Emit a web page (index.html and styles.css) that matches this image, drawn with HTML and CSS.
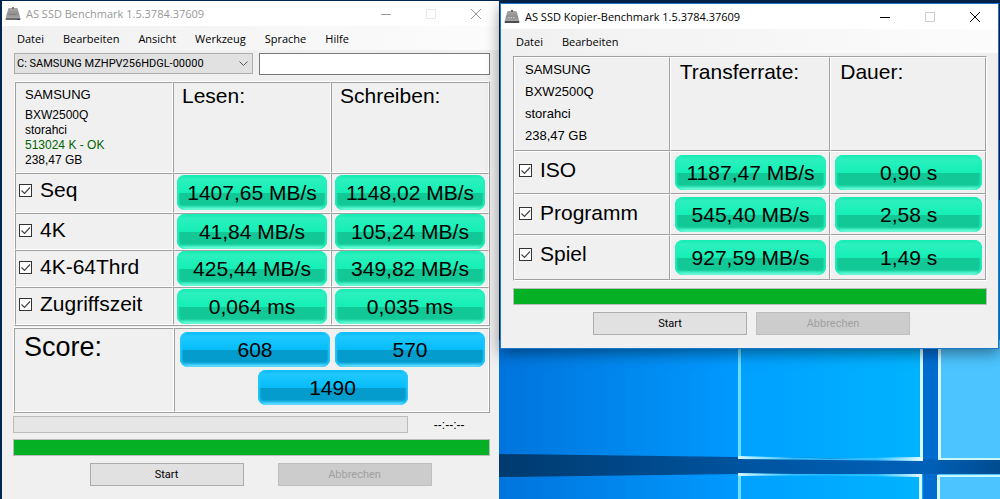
FILE: index.html
```
<!DOCTYPE html>
<html lang="de">
<head>
    <meta charset="UTF-8">
    <meta name="viewport" content="width=device-width, initial-scale=1.0">
    <title>AS SSD Benchmark</title>
    <link rel="stylesheet" href="styles.css">
</head>
<body>
    <svg class="wallpaper" viewBox="0 0 1000 499" preserveAspectRatio="none" aria-hidden="true">
        <defs>
            <linearGradient id="pane1"><stop offset="0" stop-color="#0074dc"/><stop offset="1" stop-color="#009aff"/></linearGradient>
            <linearGradient id="pane2"><stop offset="0" stop-color="#00a0ff"/><stop offset="1" stop-color="#00b4ff"/></linearGradient>
            <linearGradient id="bar"><stop offset="0" stop-color="#003a6e"/><stop offset="0.5" stop-color="#0054a0"/><stop offset="0.85" stop-color="#0060b8"/><stop offset="1" stop-color="#004c90"/></linearGradient>
            <linearGradient id="edge"><stop offset="0" stop-color="#d8fcff"/><stop offset="0.3" stop-color="#30c0ff"/><stop offset="0.75" stop-color="#30c0ff"/><stop offset="1" stop-color="#e8ffff"/></linearGradient>
            <linearGradient id="metal" x2="0" y2="1"><stop offset="0" stop-color="#a8a8a8"/><stop offset="0.5" stop-color="#8e8e8e"/><stop offset="1" stop-color="#b4b4b4"/></linearGradient>
        </defs>
        <rect width="1000" height="499" fill="#00264f"/>
        <rect x="996" y="200" width="4" height="150" fill="#0090e0"/>
        <rect x="499" y="340" width="240" height="159" fill="url(#pane1)"/>
        <rect x="738" y="340" width="185" height="159" fill="url(#pane2)"/>
        <rect x="923" y="340" width="15" height="159" fill="#006cd0"/>
        <rect x="938" y="340" width="62" height="159" fill="#4cc4ff"/>
        <path d="M499 454L738 457L1000 460V474L738 474L499 477Z" fill="url(#bar)"/>
        <path d="M738 340h3v118h-3zM738 474h3v25h-3z" fill="#6cdcff"/>
        <path d="M920 340h3v121h-3zM919 474h3v25h-3zM938 340h3v120h-3zM937 475h3v24h-3z" fill="#d8fbff"/>
        <path d="M738 456L830 458.500L922 457V461L830 460L738 459Z" fill="url(#edge)"/>
        <path d="M738 473L830 474.500L922 474V477L830 475.500L738 476Z" fill="url(#edge)"/>
        <path d="M938 458h62v2h-62zM938 475h62v2h-62z" fill="#c8f8ff"/>
    </svg>

    <section class="window window-main">
        <header class="titlebar">
            <svg class="app-icon" viewBox="0 0 16 14"><path d="M3.500 1h9l2.700 9.500v2.500H.8v-2.500z" fill="url(#metal)"/><path d="M.8 11h14.400v2H.8z" fill="#6c6c6c"/><path d="M7 0h2v2H7z" fill="#777"/><path d="M4 7.500h1.500m1 0H8m1 0h1.500" stroke="#777"/><path d="M12 12h3v1h-3z" fill="#33a"/></svg>
            <h1>AS SSD Benchmark 1.5.3784.37609</h1>
            <div class="controls">
                <button aria-label="Minimieren"><svg viewBox="0 0 10 10"><path d="M0 5.500h10"/></svg></button>
                <button class="maximize" aria-label="Maximieren" disabled><svg viewBox="0 0 10 10"><path d="M.5.5h9v9h-9z"/></svg></button>
                <button aria-label="Schließen"><svg viewBox="0 0 10 10"><path d="M0 0l10 10M10 0L0 10"/></svg></button>
            </div>
        </header>
        <nav class="menubar">
            <button>Datei</button>
            <button>Bearbeiten</button>
            <button>Ansicht</button>
            <button>Werkzeug</button>
            <button>Sprache</button>
            <button>Hilfe</button>
        </nav>
        <main class="content">
            <div class="toolbar">
                <div class="drive">
                    <select aria-label="Laufwerk"><option>C: SAMSUNG MZHPV256HDGL-00000</option></select>
                    <svg viewBox="0 0 9 6"><path d="M.5.5l4 4 4-4"/></svg>
                </div>
                <input class="note" type="text" aria-label="Notiz">
            </div>
            <table class="results">
                <thead>
                    <tr>
                        <th class="device">
                            <p class="vendor">SAMSUNG</p>
                            <p>BXW2500Q</p>
                            <p>storahci</p>
                            <p class="ok">513024 K - OK</p>
                            <p>238,47 GB</p>
                        </th>
                        <th>Lesen:</th>
                        <th>Schreiben:</th>
                    </tr>
                </thead>
                <tbody>
                    <tr class="first">
                        <td><label><input type="checkbox" checked>Seq</label></td>
                        <td><div class="pill">1407,65 MB/s</div></td>
                        <td><div class="pill">1148,02 MB/s</div></td>
                    </tr>
                    <tr>
                        <td><label><input type="checkbox" checked>4K</label></td>
                        <td><div class="pill">41,84 MB/s</div></td>
                        <td><div class="pill">105,24 MB/s</div></td>
                    </tr>
                    <tr>
                        <td><label><input type="checkbox" checked>4K-64Thrd</label></td>
                        <td><div class="pill">425,44 MB/s</div></td>
                        <td><div class="pill">349,82 MB/s</div></td>
                    </tr>
                    <tr class="last">
                        <td><label><input type="checkbox" checked>Zugriffszeit</label></td>
                        <td><div class="pill">0,064 ms</div></td>
                        <td><div class="pill">0,035 ms</div></td>
                    </tr>
                </tbody>
            </table>
            <div class="score">
                <h2>Score:</h2>
                <div class="score-values">
                    <div class="pill blue">608</div>
                    <div class="pill blue">570</div>
                    <div class="pill blue total">1490</div>
                </div>
            </div>
            <div class="status">
                <progress value="0" max="100" aria-label="Teilfortschritt"></progress>
                <span>--:--:--</span>
            </div>
            <progress value="100" max="100" aria-label="Gesamtfortschritt"></progress>
            <div class="actions">
                <button>Start</button>
                <button disabled>Abbrechen</button>
            </div>
        </main>
    </section>

    <section class="window window-copy">
        <header class="titlebar">
            <svg class="app-icon" viewBox="0 0 16 14"><path d="M3.500 1h9l2.700 9.500v2.500H.8v-2.500z" fill="url(#metal)"/><path d="M.8 11h14.400v2H.8z" fill="#4c4c4c"/><path d="M7 0h2v2H7z" fill="#666"/><path d="M4 7.500h1.500m1 0H8m1 0h1.500" stroke="#ccc"/></svg>
            <h1>AS SSD Kopier-Benchmark 1.5.3784.37609</h1>
            <div class="controls">
                <button aria-label="Minimieren"><svg viewBox="0 0 10 10"><path d="M0 5.500h10"/></svg></button>
                <button class="maximize" aria-label="Maximieren" disabled><svg viewBox="0 0 10 10"><path d="M.5.5h9v9h-9z"/></svg></button>
                <button aria-label="Schließen"><svg viewBox="0 0 10 10"><path d="M0 0l10 10M10 0L0 10"/></svg></button>
            </div>
        </header>
        <nav class="menubar">
            <button>Datei</button>
            <button>Bearbeiten</button>
        </nav>
        <main class="content">
            <table class="results">
                <thead>
                    <tr>
                        <th class="device">
                            <p>SAMSUNG</p>
                            <p>BXW2500Q</p>
                            <p>storahci</p>
                            <p>238,47 GB</p>
                        </th>
                        <th class="rate">Transferrate:</th>
                        <th>Dauer:</th>
                    </tr>
                </thead>
                <tbody>
                    <tr>
                        <td><label><input type="checkbox" checked>ISO</label></td>
                        <td><div class="pill">1187,47 MB/s</div></td>
                        <td><div class="pill">0,90 s</div></td>
                    </tr>
                    <tr class="middle">
                        <td><label><input type="checkbox" checked>Programm</label></td>
                        <td><div class="pill">545,40 MB/s</div></td>
                        <td><div class="pill">2,58 s</div></td>
                    </tr>
                    <tr class="last">
                        <td><label><input type="checkbox" checked>Spiel</label></td>
                        <td><div class="pill">927,59 MB/s</div></td>
                        <td><div class="pill">1,49 s</div></td>
                    </tr>
                </tbody>
            </table>
            <progress value="100" max="100" aria-label="Fortschritt"></progress>
            <div class="actions">
                <button>Start</button>
                <button disabled>Abbrechen</button>
            </div>
        </main>
    </section>
</body>
</html>
```
FILE: styles.css
```
* {
    box-sizing: border-box;
}
body {
    margin: 0;
    min-height: 100vh;
    overflow: hidden;
    background: #00264f;
    color: #000;
    font-family: "Liberation Sans", Arial, sans-serif;
    font-size: 12px;
}
h1, h2, p {
    margin: 0;
    font-weight: normal;
}
button {
    padding: 0;
    font: inherit;
    color: inherit;
}
.wallpaper {
    position: absolute;
    top: 0;
    left: 0;
    width: 100%;
    height: 100%;
}

/* windows */
.window {
    position: absolute;
    background: #f0f0f0;
}
.window-main {
    top: 1px;
    left: 2px;
    right: calc(50% + 1px);
    min-height: 100vh;
}
.window-copy {
    top: 3px;
    left: 50%;
    right: 1px;
    border: 1px solid #1a78cc;
    box-shadow: 0 4px 14px rgba(0, 0, 0, 0.45);
}
.titlebar {
    display: flex;
    align-items: center;
    height: 25px;
    padding: 0 1px 0 3px;
    background: #fff;
    font-family: "Open Sans", "Noto Sans", sans-serif;
}
.titlebar h1 {
    flex: 1;
    padding-left: 5px;
    font-size: 11px;
    white-space: nowrap;
}
.app-icon {
    width: 16px;
    height: 14px;
}
.window-main .titlebar {
    color: #999;
}
.controls {
    display: flex;
}
.controls button {
    display: flex;
    align-items: center;
    justify-content: center;
    width: 45px;
    height: 25px;
    border: none;
    background: none;
}
.controls svg {
    width: 10px;
    height: 10px;
    fill: none;
    stroke: currentColor;
}
.controls .maximize {
    color: #ccc;
}
.window-main .maximize {
    color: #e6e6e6;
}
.menubar {
    display: flex;
    align-items: center;
    gap: 19px;
    height: 24px;
    padding-left: 15px;
    background: linear-gradient(90deg, #f0f0f0, #fcfcfc);
    font-family: "Open Sans", "Noto Sans", sans-serif;
    font-size: 11px;
}
.menubar button {
    border: none;
    background: none;
}
.content {
    padding: 3px 9px 12px 11px;
}
.window-copy .content {
    padding: 3px 11px 13px 12px;
}

/* drive selection */
.toolbar {
    display: flex;
    align-items: flex-start;
    gap: 6px;
    margin: 0 0 6px 1px;
}
.drive {
    position: relative;
    flex: 24;
}
.drive select {
    display: block;
    width: 100%;
    height: 21px;
    padding: 0 2px;
    appearance: none;
    border: 1px solid #adadad;
    border-radius: 0;
    background: #e1e1e1;
    color: #000;
    font-family: Roboto, sans-serif;
    font-size: 11px;
}
.drive svg {
    position: absolute;
    top: 8px;
    right: 5px;
    width: 9px;
    height: 6px;
    fill: none;
    stroke: #555;
}
.note {
    flex: 23;
    min-width: 0;
    height: 22px;
    padding: 0;
    border: 1px solid #7a7a7a;
    background: #fff;
}

/* result grid */
.results {
    width: 100%;
    table-layout: fixed;
    border-collapse: separate;
    border-spacing: 0;
    border: 1px solid;
}
.window-main .results {
    width: calc(100% - 1px);
    margin: 0 0 1px 1px;
    border-color: #fff #a0a0a0 #a0a0a0 #fff;
}
.window-copy .results {
    margin-bottom: 7px;
    border-color: #a0a0a0 #fff #fff #a0a0a0;
}
.results th, .results td {
    padding: 0 3px;
    border: 1px solid;
    border-color: #a0a0a0 #fff #fff #a0a0a0;
}
.window-copy th, .window-copy td {
    padding: 0 3px 0 4px;
    border-color: #fff #a0a0a0 #a0a0a0 #fff;
}
.results th {
    height: 91px;
    padding: 0 8px;
    text-align: left;
    vertical-align: top;
    font-size: 21px;
    font-weight: normal;
    line-height: 26px;
}
.window-copy th {
    height: 94px;
    padding: 1px 9px 0;
}
.results .device {
    padding: 1px 9px 0;
    font-size: 12px;
    line-height: 15px;
}
.window-copy .device {
    width: 33%;
    padding-left: 10px;
}
.window-copy .rate {
    width: 34%;
}
.device .vendor {
    margin-bottom: 3px;
    font-size: 13px;
    line-height: 21px;
}
.device .ok {
    color: #006400;
}
.window-copy .device p {
    font-size: 13px;
    line-height: 22px;
}
.window-main td {
    height: 37px;
}
.window-main .first td {
    height: 40px;
    padding-bottom: 1px;
}
.window-main .last td {
    height: 38px;
}
.window-copy td {
    height: 43px;
}
.window-copy .middle td {
    height: 41px;
}
.window-copy .last td {
    height: 45px;
}
.results td:first-child {
    padding: 4px 3px 0;
    vertical-align: top;
}
.window-copy td:first-child {
    padding: 6px 4px 0;
}
.results label {
    display: flex;
    align-items: center;
    gap: 8px;
    font-size: 21px;
    line-height: 24px;
    white-space: nowrap;
}
.results input {
    flex: none;
    width: 13px;
    height: 13px;
    margin: 0;
    appearance: none;
    border: 1px solid #333;
    background: #fff;
}
.results input:checked {
    background: #fff url("data:image/svg+xml,%3Csvg xmlns='http://www.w3.org/2000/svg' viewBox='0 0 11 11'%3E%3Cpath d='M1.500 5.500l3 3 5.500-6' fill='none' stroke='%23444' stroke-width='1.200'/%3E%3C/svg%3E");
}
.pill {
    height: 35px;
    border-radius: 8px;
    background: linear-gradient(#10e8b0 0, #2cf0be 4px, #14efb6 18px, #12c896 18px, #12c896 30px, #50f8d0 33px, #b8fce8 35px);
    box-shadow: inset 2px 0 2px #20f0bc, inset -2px 0 2px #20f0bc;
    font-size: 21px;
    line-height: 36px;
    text-align: center;
    white-space: nowrap;
}
.pill.blue {
    background: linear-gradient(#08b4f0 0, #20c8ff 4px, #04bcf8 18px, #049ccc 18px, #049ccc 30px, #40d0ff 33px, #b0ecff 35px);
    box-shadow: inset 2px 0 2px #20c8ff, inset -2px 0 2px #20c8ff;
}

/* score */
.score {
    display: grid;
    grid-template-columns: minmax(0, 160fr) minmax(0, 315fr);
    margin-bottom: 3px;
    border: 1px solid;
    border-color: #fff #a0a0a0 #a0a0a0 #fff;
}
.score h2 {
    padding: 2px 9px;
    border: 1px solid;
    border-color: #a0a0a0 #fff #fff #a0a0a0;
    font-size: 27px;
    line-height: 32px;
}
.score-values {
    display: grid;
    grid-template-columns: repeat(4, 1fr);
    gap: 3px 5px;
    padding: 3px 3px 6px 5px;
    border: 1px solid;
    border-color: #a0a0a0 #fff #fff #a0a0a0;
}
.score-values .pill {
    grid-column: span 2;
}
.score-values .total {
    grid-column: 2 / span 2;
}

/* progress and buttons */
progress {
    display: block;
    width: 100%;
    height: 17px;
    appearance: none;
    border: 1px solid #bcbcbc;
    background: #e6e6e6;
}
progress::-webkit-progress-bar {
    background: #e6e6e6;
}
progress::-webkit-progress-value {
    background: #06b025;
}
.status {
    display: flex;
    align-items: center;
    margin-bottom: 6px;
}
.status progress {
    flex: 395;
}
.status span {
    flex: 82;
    text-align: center;
}
.actions {
    display: flex;
    justify-content: center;
    gap: 34px;
    margin-top: 7px;
    padding-left: 18px;
}
.window-copy .actions {
    gap: 9px;
    padding-left: 3px;
}
.actions button {
    width: 154px;
    height: 23px;
    border: 1px solid #adadad;
    background: #e1e1e1;
    font-family: Roboto, sans-serif;
    font-size: 11px;
}
.actions button:disabled {
    border-color: #bfbfbf;
    background: #ccc;
    color: #a0a0a0;
}
```
